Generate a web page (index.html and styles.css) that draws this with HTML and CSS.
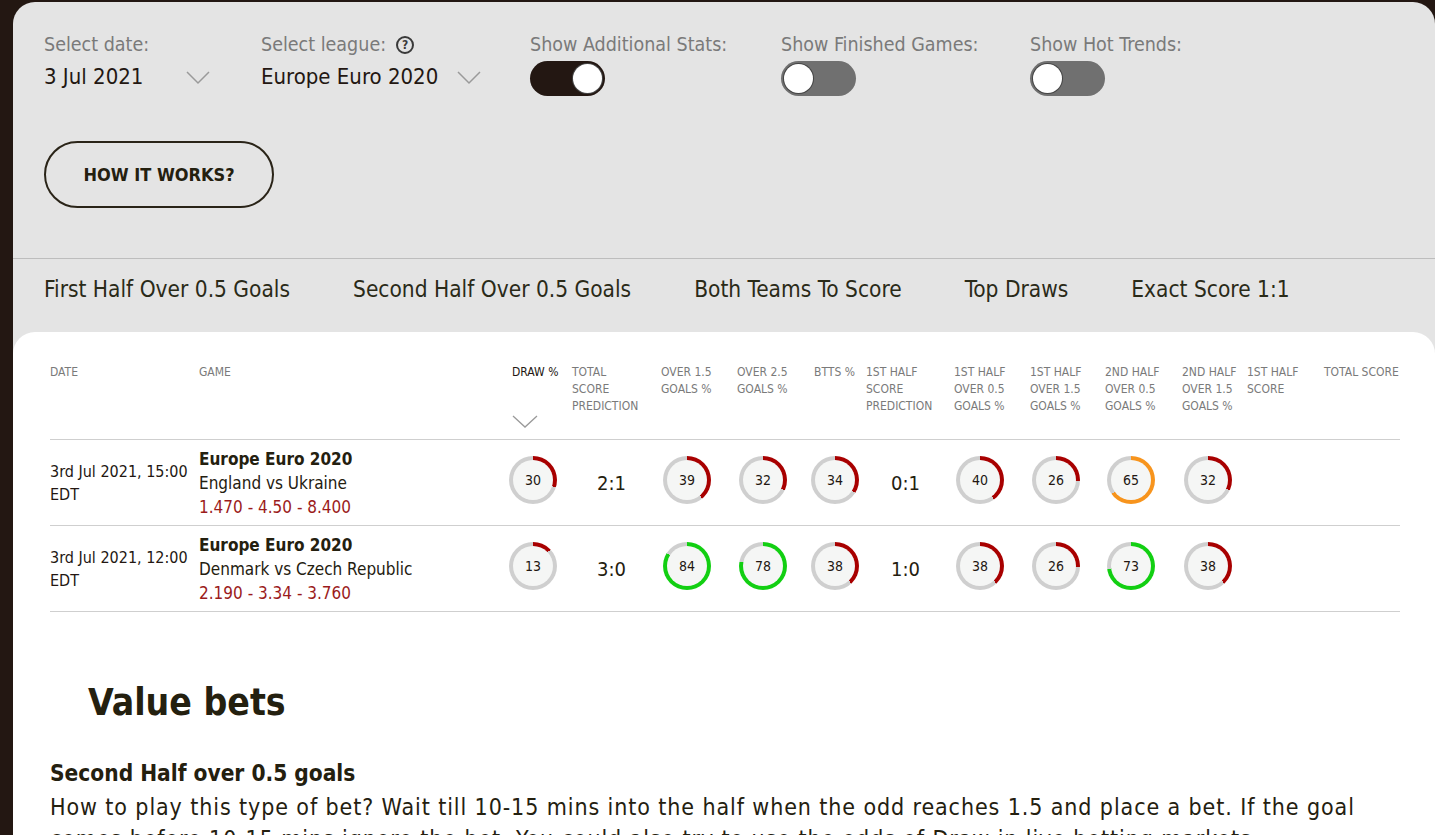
FILE: index.html
```html
<!DOCTYPE html>
<html lang="en">
<head>
    <meta charset="UTF-8">
    <meta name="viewport" content="width=device-width, initial-scale=1.0">
    <title>Football Predictions</title>
    <link rel="stylesheet" href="styles.css">
</head>
<body>
    <div class="panel">
        <div class="controls">
            <div class="field">
                <div class="label">Select date:</div>
                <div class="select select-date">
                    <span class="value">3 Jul 2021</span>
                    <svg class="chevron" width="24" height="14" viewBox="0 0 24 14"><polyline points="1,1 12,12 23,1" fill="none" stroke="#9a9a9a" stroke-width="1.5"/></svg>
                </div>
            </div>
            <div class="field">
                <div class="label">Select league: <span class="help">?</span></div>
                <div class="select">
                    <span class="value">Europe Euro 2020</span>
                    <svg class="chevron" width="24" height="14" viewBox="0 0 24 14"><polyline points="1,1 12,12 23,1" fill="none" stroke="#9a9a9a" stroke-width="1.5"/></svg>
                </div>
            </div>
            <div class="field">
                <div class="label">Show Additional Stats:</div>
                <div class="switch on"><span class="knob"></span></div>
            </div>
            <div class="field">
                <div class="label">Show Finished Games:</div>
                <div class="switch"><span class="knob"></span></div>
            </div>
            <div class="field">
                <div class="label">Show Hot Trends:</div>
                <div class="switch"><span class="knob"></span></div>
            </div>
        </div>
        <div class="actions">
            <button class="how">HOW IT WORKS?</button>
        </div>

        <nav class="tabs">
            <a href="#">First Half Over 0.5 Goals</a>
            <a href="#">Second Half Over 0.5 Goals</a>
            <a href="#">Both Teams To Score</a>
            <a href="#">Top Draws</a>
            <a href="#">Exact Score 1:1</a>
        </nav>

        <div class="card">
            <div class="table">
                <div class="row head">
                    <div>Date</div>
                    <div>Game</div>
                    <div class="sorted">Draw %
                        <svg class="sort" width="26" height="14" viewBox="0 0 26 14"><polyline points="1,1 13,12 25,1" fill="none" stroke="#9a9a9a" stroke-width="1.3"/></svg>
                    </div>
                    <div>Total<br>score<br>prediction</div>
                    <div>Over 1.5<br>goals %</div>
                    <div>Over 2.5<br>goals %</div>
                    <div>BTTS %</div>
                    <div>1st half<br>score<br>prediction</div>
                    <div>1st half<br>over 0.5<br>goals %</div>
                    <div>1st half<br>over 1.5<br>goals %</div>
                    <div>2nd half<br>over 0.5<br>goals %</div>
                    <div>2nd half<br>over 1.5<br>goals %</div>
                    <div>1st half<br>score</div>
                    <div>Total score</div>
                </div>

                <div class="row">
                    <div class="date">3rd Jul 2021, 15:00<br>EDT</div>
                    <div class="game">
                        <b>Europe Euro 2020</b>
                        <span>England vs Ukraine</span>
                        <span class="odds">1.470 - 4.50 - 8.400</span>
                    </div>
                    <div class="cell shift"><div class="ring low" style="--p:30"><span>30</span></div></div>
                    <div class="score">2:1</div>
                    <div class="cell"><div class="ring low" style="--p:39"><span>39</span></div></div>
                    <div class="cell"><div class="ring low" style="--p:32"><span>32</span></div></div>
                    <div class="cell shift"><div class="ring low" style="--p:34"><span>34</span></div></div>
                    <div class="score">0:1</div>
                    <div class="cell"><div class="ring low" style="--p:40"><span>40</span></div></div>
                    <div class="cell"><div class="ring low" style="--p:26"><span>26</span></div></div>
                    <div class="cell"><div class="ring mid" style="--p:65"><span>65</span></div></div>
                    <div class="cell"><div class="ring low" style="--p:32"><span>32</span></div></div>
                    <div></div>
                    <div></div>
                </div>

                <div class="row">
                    <div class="date">3rd Jul 2021, 12:00<br>EDT</div>
                    <div class="game">
                        <b>Europe Euro 2020</b>
                        <span>Denmark vs Czech Republic</span>
                        <span class="odds">2.190 - 3.34 - 3.760</span>
                    </div>
                    <div class="cell shift"><div class="ring low" style="--p:13"><span>13</span></div></div>
                    <div class="score">3:0</div>
                    <div class="cell"><div class="ring high" style="--p:84"><span>84</span></div></div>
                    <div class="cell"><div class="ring high" style="--p:78"><span>78</span></div></div>
                    <div class="cell shift"><div class="ring low" style="--p:38"><span>38</span></div></div>
                    <div class="score">1:0</div>
                    <div class="cell"><div class="ring low" style="--p:38"><span>38</span></div></div>
                    <div class="cell"><div class="ring low" style="--p:26"><span>26</span></div></div>
                    <div class="cell"><div class="ring high" style="--p:73"><span>73</span></div></div>
                    <div class="cell"><div class="ring low" style="--p:38"><span>38</span></div></div>
                    <div></div>
                    <div></div>
                </div>
            </div>

            <h2 class="section-title">Value bets</h2>
            <h3 class="bet-title">Second Half over 0.5 goals</h3>
            <p class="bet-text">How to play this type of bet? Wait till 10-15 mins into the half when the odd reaches 1.5 and place a bet. If the goal<br>comes before 10-15 mins ignore the bet. You could also try to use the odds of Draw in live betting markets.</p>
        </div>
    </div>
</body>
</html>
```

FILE: styles.css
```css
body {
    margin: 0;
    background-color: #231712;
    font-family: "DejaVu Sans Condensed", "DejaVu Sans", sans-serif;
    color: #24200f;
}
.panel {
    margin: 2px 0 0 13px;
    background-color: #e4e4e4;
    border-radius: 22px 22px 0 0;
    min-height: 833px;
}
.controls {
    display: grid;
    grid-template-columns: 217px 269px 251px 249px auto;
    padding: 31px 31px 0;
}
.label {
    font-size: 19.5px;
    line-height: 24px;
    color: #7a7a7a;
    display: flex;
    align-items: center;
    gap: 10px;
}
.help {
    display: inline-flex;
    align-items: center;
    justify-content: center;
    width: 14px;
    height: 14px;
    border: 2px solid #3a3a3a;
    border-radius: 50%;
    color: #3a3a3a;
    font-size: 12px;
    font-weight: bold;
    line-height: 1;
}
.select {
    display: flex;
    align-items: center;
    gap: 19px;
    font-size: 22px;
    line-height: 40px;
    color: #231712;
}
.select-date .value {
    width: 123px;
}
.chevron {
    margin-top: 2px;
}
.switch {
    display: flex;
    align-items: center;
    width: 75px;
    height: 35px;
    margin-top: 4px;
    padding: 0 3px;
    box-sizing: border-box;
    border-radius: 18px;
    background-color: #707070;
}
.switch.on {
    justify-content: flex-end;
    background-color: #231712;
}
.knob {
    width: 29px;
    height: 29px;
    border-radius: 50%;
    background-color: #fff;
    box-shadow: 0 0 0 1px #444;
}
.actions {
    padding: 44px 31px 50px;
}
.how {
    width: 230px;
    height: 67px;
    border: 2px solid #2a2418;
    border-radius: 34px;
    background: transparent;
    font-family: inherit;
    font-size: 18px;
    font-weight: bold;
    color: #24200f;
    cursor: pointer;
}
.tabs {
    display: flex;
    gap: 63px;
    padding: 15px 31px 0;
    height: 58px;
    border-top: 1px solid #bdbdbd;
}
.tabs a {
    font-size: 22.5px;
    line-height: 30px;
    color: #2a2a18;
    text-decoration: none;
}
.card {
    background-color: #fff;
    border-radius: 22px 22px 0 0;
    padding: 32px 35px 0 37px;
    min-height: 500px;
}
.table {
    display: flex;
    flex-direction: column;
}
.row {
    display: grid;
    grid-template-columns: 149px 313px 60px 89px 76px 77px 52px 88px 76px 75px 77px 65px 77px 76px;
    align-items: center;
    height: 85px;
    border-bottom: 1px solid #cfcfcf;
}
.row.head {
    align-items: start;
    height: 75px;
    font-size: 12px;
    line-height: 17px;
    text-transform: uppercase;
    color: #7a7a7a;
}
.row.head .sorted {
    color: #231712;
}
.sort {
    display: block;
    margin-top: 34px;
}
.date {
    font-size: 16px;
    line-height: 23px;
    color: #231712;
}
.game {
    display: flex;
    flex-direction: column;
    font-size: 17px;
    line-height: 24px;
}
.game b {
    font-size: 17px;
}
.odds {
    color: #9b1b1b;
}
.score {
    padding-left: 25px;
    font-size: 20px;
}
.cell {
    margin-left: 2px;
    margin-top: -5px;
}
.cell.shift {
    margin-left: -3px;
}
.ring {
    --c: #a80000;
    width: 48px;
    height: 48px;
    border-radius: 50%;
    background: conic-gradient(var(--c) calc(var(--p) * 1%), #cfcfcf 0);
    display: flex;
    align-items: center;
    justify-content: center;
}
.ring.mid {
    --c: #f7941d;
}
.ring.high {
    --c: #12cf12;
}
.ring span {
    width: 40px;
    height: 40px;
    border-radius: 50%;
    background-color: #f5f6f5;
    display: flex;
    align-items: center;
    justify-content: center;
    font-size: 14px;
    color: #231712;
}
.section-title {
    margin: 66px 0 0 38px;
    font-size: 37px;
    line-height: 50px;
    color: #24200f;
}
.bet-title {
    margin: 29px 0 0;
    font-size: 22.5px;
    line-height: 32px;
}
.bet-text {
    margin: 2px 0 0;
    font-size: 23px;
    line-height: 32px;
    letter-spacing: 0.9px;
}
```
